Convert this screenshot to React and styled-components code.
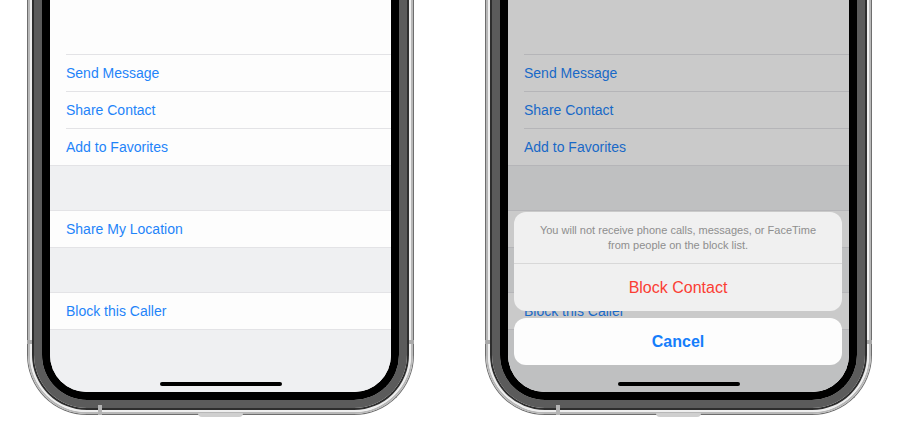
import React from "react";
import styled, { createGlobalStyle } from "styled-components";

const Global = createGlobalStyle`
  html, body {
    margin: 0;
    padding: 0;
    background: #ffffff;
  }
  body {
    font-family: "Liberation Sans", Arial, sans-serif;
    -webkit-font-smoothing: antialiased;
  }
`;

const Stage = styled.div`
  display: flex;
  gap: 71px;
  padding-left: 27px;
  height: 437px;
  overflow: hidden;
  background: #ffffff;
`;

const Phone = styled.div`
  position: relative;
  flex: none;
  width: 387px;
  height: 415px;
`;

/* One ring of the stainless frame; the top runs off the page, so no top edge */
const Ring = styled.div`
  box-sizing: border-box;
  height: 100%;
  border: ${(p) => p.$w}px solid ${(p) => p.$c};
  border-top: none;
  border-radius: 0 0 ${(p) => p.$r}px ${(p) => p.$r}px;
  ${(p) => p.$glow && `box-shadow: inset 0 0 0 2px ${p.$glow};`}
`;

const Screen = styled.div`
  position: relative;
  box-sizing: border-box;
  height: 100%;
  overflow: hidden;
  display: flex;
  flex-direction: column;
  background: #eff0f2;
  border-radius: 0 0 37px 37px;
`;

const SideMark = styled.div`
  position: absolute;
  top: 340px;
  ${(p) => (p.$side === "left" ? "left: 0;" : "right: 0;")}
  width: 5px;
  height: 4px;
  background: #a9a9a9;
`;

const BottomMark = styled.div`
  position: absolute;
  left: 71px;
  top: 405px;
  width: 4px;
  height: 10px;
  background: #b4b4b4;
`;

const Port = styled.div`
  position: absolute;
  left: 171px;
  top: 413px;
  width: 45px;
  height: 4px;
  border-radius: 0 0 8px 8px;
  background: #cfcfcf;
`;

const TopCard = styled.div`
  flex: none;
  height: 54px;
  background: #fdfdfd;
`;

const Group = styled.div`
  flex: none;
  background: #fdfdfd;
  border-top: ${(p) => (p.$top ? "1px solid #e3e3e6" : "none")};
  border-bottom: 1px solid #e3e3e6;
`;

const Row = styled.div`
  display: flex;
  align-items: center;
  height: 36px;
  margin-left: 16px;
  border-top: ${(p) => (p.$sep ? "1px solid #e3e3e6" : "none")};
  font-size: 14px;
  color: #1f84f9;
  white-space: nowrap;
`;

const Gap = styled.div`
  flex: none;
  height: ${(p) => p.$h}px;
`;

const Dim = styled.div`
  position: absolute;
  inset: 0;
  background: rgba(0, 0, 0, 0.2);
`;

const HomeBar = styled.div`
  position: absolute;
  left: 50%;
  bottom: 6px;
  width: 122px;
  height: 4px;
  margin-left: -61px;
  border-radius: 2px;
  background: #000000;
`;

const Sheet = styled.div`
  position: absolute;
  left: 6px;
  right: 7px;
  bottom: 27px;
  display: flex;
  flex-direction: column;
  gap: 7px;
`;

const SheetGroup = styled.div`
  display: flex;
  flex-direction: column;
  border-radius: 12px;
  overflow: hidden;
  background: #f0f0f0;
`;

const SheetMessage = styled.div`
  padding: 11px 14px 10px;
  text-align: center;
  font-size: 11px;
  line-height: 15px;
  color: #8e8e8e;
  border-bottom: 1px solid #d8d8d8;
`;

const SheetButton = styled.div`
  display: flex;
  align-items: center;
  justify-content: center;
  height: 47px;
  font-size: 16px;
  font-weight: ${(p) => (p.$bold ? 700 : 400)};
  color: ${(p) => p.$color};
  background: ${(p) => p.$bg || "transparent"};
  border-radius: ${(p) => (p.$bg ? "12px" : "0")};
`;

function ContactActions() {
  return (
    <>
      <TopCard />
      <Group>
        <Row $sep>Send Message</Row>
        <Row $sep>Share Contact</Row>
        <Row $sep>Add to Favorites</Row>
      </Group>
      <Gap $h={44} />
      <Group $top>
        <Row>Share My Location</Row>
      </Group>
      <Gap $h={44} />
      <Group $top>
        <Row>Block this Caller</Row>
      </Group>
    </>
  );
}

function Handset({ children }) {
  return (
    <Phone>
      <Ring $w={1} $c="#6e6e6e" $r={60}>
        <Ring $w={2} $c="#b8b8b8" $r={59}>
          <Ring $w={2} $c="#eeeeee" $r={57}>
            <Ring $w={2} $c="#2e2e2e" $r={55}>
              <Ring $w={8} $c="#5b5b5b" $r={53}>
                <Ring $w={8} $c="#000000" $r={45}>
                  <Screen>{children}</Screen>
                </Ring>
              </Ring>
            </Ring>
          </Ring>
        </Ring>
      </Ring>
      <SideMark $side="left" />
      <SideMark $side="right" />
      <BottomMark />
      <Port />
    </Phone>
  );
}

export default function App() {
  return (
    <>
      <Global />
      <Stage>
        <Handset>
          <ContactActions />
          <HomeBar />
        </Handset>
        <Handset>
          <ContactActions />
          <Dim />
          <Sheet>
            <SheetGroup>
              <SheetMessage>
                You will not receive phone calls, messages, or FaceTime
                <br />
                from people on the block list.
              </SheetMessage>
              <SheetButton $color="#fb3e34">Block Contact</SheetButton>
            </SheetGroup>
            <SheetButton $bold $color="#157efb" $bg="#fdfdfd">
              Cancel
            </SheetButton>
          </Sheet>
          <HomeBar />
        </Handset>
      </Stage>
    </>
  );
}
